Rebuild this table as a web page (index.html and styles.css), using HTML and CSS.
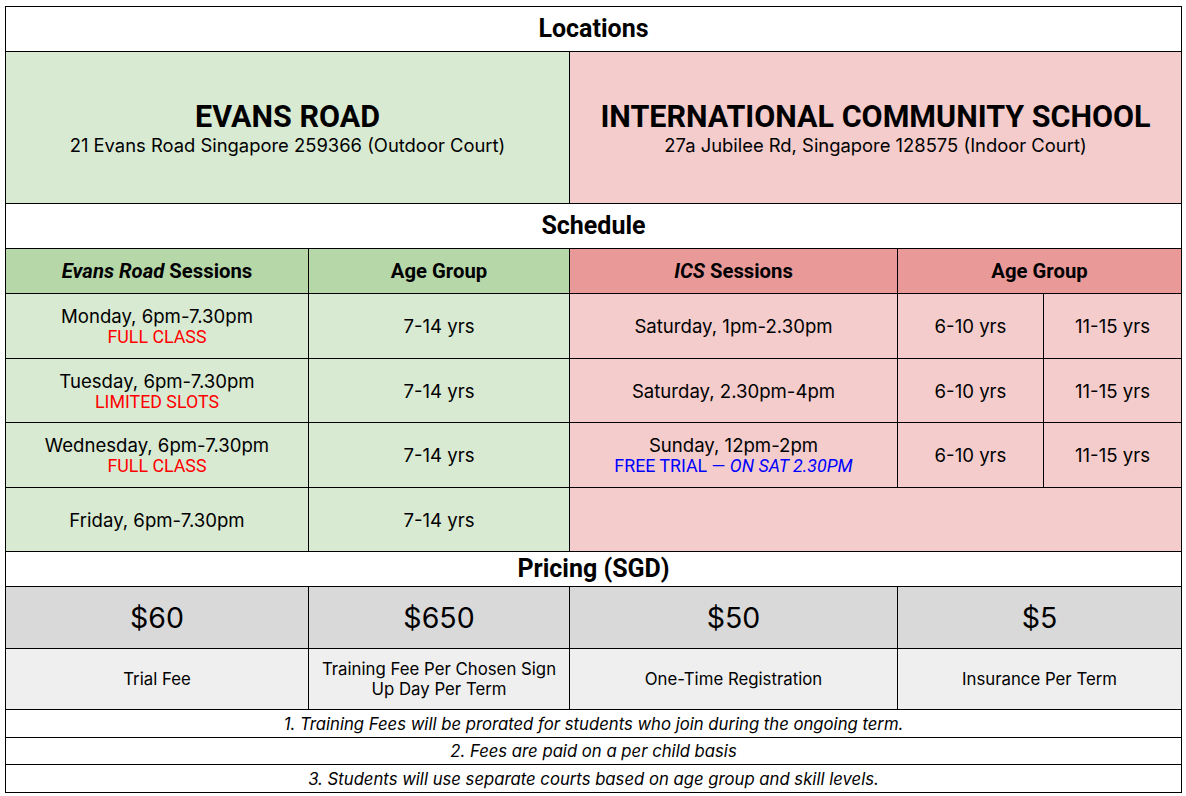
FILE: index.html
```html
<!DOCTYPE html>
<html>
<head>
<meta charset="utf-8">
<link rel="stylesheet" href="styles.css">
</head>
<body>
<div class="wrap">
<table class="sheet">
  <colgroup>
    <col class="c1"><col class="c2"><col class="c3"><col class="c4"><col class="c5">
  </colgroup>
  <tr class="r-title"><td colspan="5" class="title">Locations</td></tr>
  <tr class="r-loc">
    <td colspan="2" class="green loc"><div class="loc-name">EVANS ROAD</div><div class="loc-addr">21 Evans Road Singapore 259366 (Outdoor Court)</div></td>
    <td colspan="3" class="pink loc"><div class="loc-name">INTERNATIONAL COMMUNITY SCHOOL</div><div class="loc-addr">27a Jubilee Rd, Singapore 128575 (Indoor Court)</div></td>
  </tr>
  <tr class="r-title"><td colspan="5" class="title">Schedule</td></tr>
  <tr class="r-head">
    <td class="green-h head"><em>Evans Road</em> Sessions</td>
    <td class="green-h head">Age Group</td>
    <td class="pink-h head"><em>ICS</em> Sessions</td>
    <td colspan="2" class="pink-h head">Age Group</td>
  </tr>
  <tr class="r-a">
    <td class="green cell">Monday, 6pm-7.30pm<div class="note red">FULL CLASS</div></td>
    <td class="green cell">7-14 yrs</td>
    <td class="pink cell">Saturday, 1pm-2.30pm</td>
    <td class="pink cell">6-10 yrs</td>
    <td class="pink cell">11-15 yrs</td>
  </tr>
  <tr class="r-b">
    <td class="green cell">Tuesday, 6pm-7.30pm<div class="note red">LIMITED SLOTS</div></td>
    <td class="green cell">7-14 yrs</td>
    <td class="pink cell">Saturday, 2.30pm-4pm</td>
    <td class="pink cell">6-10 yrs</td>
    <td class="pink cell">11-15 yrs</td>
  </tr>
  <tr class="r-a">
    <td class="green cell">Wednesday, 6pm-7.30pm<div class="note red">FULL CLASS</div></td>
    <td class="green cell">7-14 yrs</td>
    <td class="pink cell">Sunday, 12pm-2pm<div class="note blue">FREE TRIAL — <em>ON SAT 2.30PM</em></div></td>
    <td class="pink cell">6-10 yrs</td>
    <td class="pink cell">11-15 yrs</td>
  </tr>
  <tr class="r-b">
    <td class="green cell">Friday, 6pm-7.30pm</td>
    <td class="green cell">7-14 yrs</td>
    <td colspan="3" class="pink cell"></td>
  </tr>
  <tr class="r-ptitle"><td colspan="5" class="title">Pricing (SGD)</td></tr>
  <tr class="r-price">
    <td class="grey price">$60</td>
    <td class="grey price">$650</td>
    <td class="grey price">$50</td>
    <td colspan="2" class="grey price">$5</td>
  </tr>
  <tr class="r-label">
    <td class="lgrey label">Trial Fee</td>
    <td class="lgrey label">Training Fee Per Chosen Sign<br>Up Day Per Term</td>
    <td class="lgrey label">One-Time Registration</td>
    <td colspan="2" class="lgrey label">Insurance Per Term</td>
  </tr>
  <tr class="r-n1"><td colspan="5" class="fn">1. Training Fees will be prorated for students who join during the ongoing term.</td></tr>
  <tr class="r-n2"><td colspan="5" class="fn">2. Fees are paid on a per child basis</td></tr>
  <tr class="r-n1"><td colspan="5" class="fn">3. Students will use separate courts based on age group and skill levels.</td></tr>
</table>
</div>
</body>
</html>
```

FILE: styles.css
```css
html, body {
  margin: 0;
  padding: 0;
  background: #ffffff;
}
.wrap {
  padding: 6px 0 0 5px;
}
.sheet {
  border-collapse: collapse;
  table-layout: fixed;
  width: 1176px;
  font-family: Inter, "Liberation Sans", sans-serif;
  color: #000;
}
.c1 { width: 303px; }
.c2 { width: 261px; }
.c3 { width: 328px; }
.c4 { width: 146px; }
.c5 { width: 138px; }
.sheet td {
  border: 1px solid #000;
  padding: 0;
  text-align: center;
  vertical-align: middle;
}
.r-title { height: 45px; }
.r-loc { height: 152px; }
.r-head { height: 45px; }
.r-a { height: 65px; }
.r-b { height: 64px; }
.r-ptitle { height: 35px; }
.r-price { height: 62px; }
.r-label { height: 61px; }
.r-n1 { height: 28px; }
.r-n2 { height: 27px; }

.title {
  font-family: Roboto, "Liberation Sans", sans-serif;
  font-weight: 700;
  font-size: 25px;
  line-height: 28px;
  padding-bottom: 4px;
  background: #fff;
}
.green { background: #d9ead3; }
.pink { background: #f4cccc; }
.green-h { background: #b6d7a8; }
.pink-h { background: #ea9999; }
.grey { background: #d9d9d9; }
.lgrey { background: #efefef; }

.loc-name {
  font-family: Roboto, "Liberation Sans", sans-serif;
  font-weight: 700;
  font-size: 30.5px;
  line-height: 32px;
  padding-top: 2px;
}
.loc-addr {
  font-size: 18.4px;
  line-height: 24px;
}
.head {
  font-family: Roboto, "Liberation Sans", sans-serif;
  font-weight: 700;
  font-size: 20.3px;
  padding-bottom: 2px;
}
.cell {
  font-size: 18.6px;
  line-height: 22px;
  padding-bottom: 3px;
}
.note {
  font-family: Roboto, "Liberation Sans", sans-serif;
  font-size: 17.8px;
  line-height: 20px;
}
.red { color: #ff0000; }
.blue { color: #0000ff; }
.price {
  font-size: 28.5px;
  padding-bottom: 2px;
}
.label {
  font-size: 16.8px;
  line-height: 20px;
}
.fn {
  font-style: italic;
  font-size: 16.7px;
  background: #fff;
  padding-bottom: 1px;
}
```
